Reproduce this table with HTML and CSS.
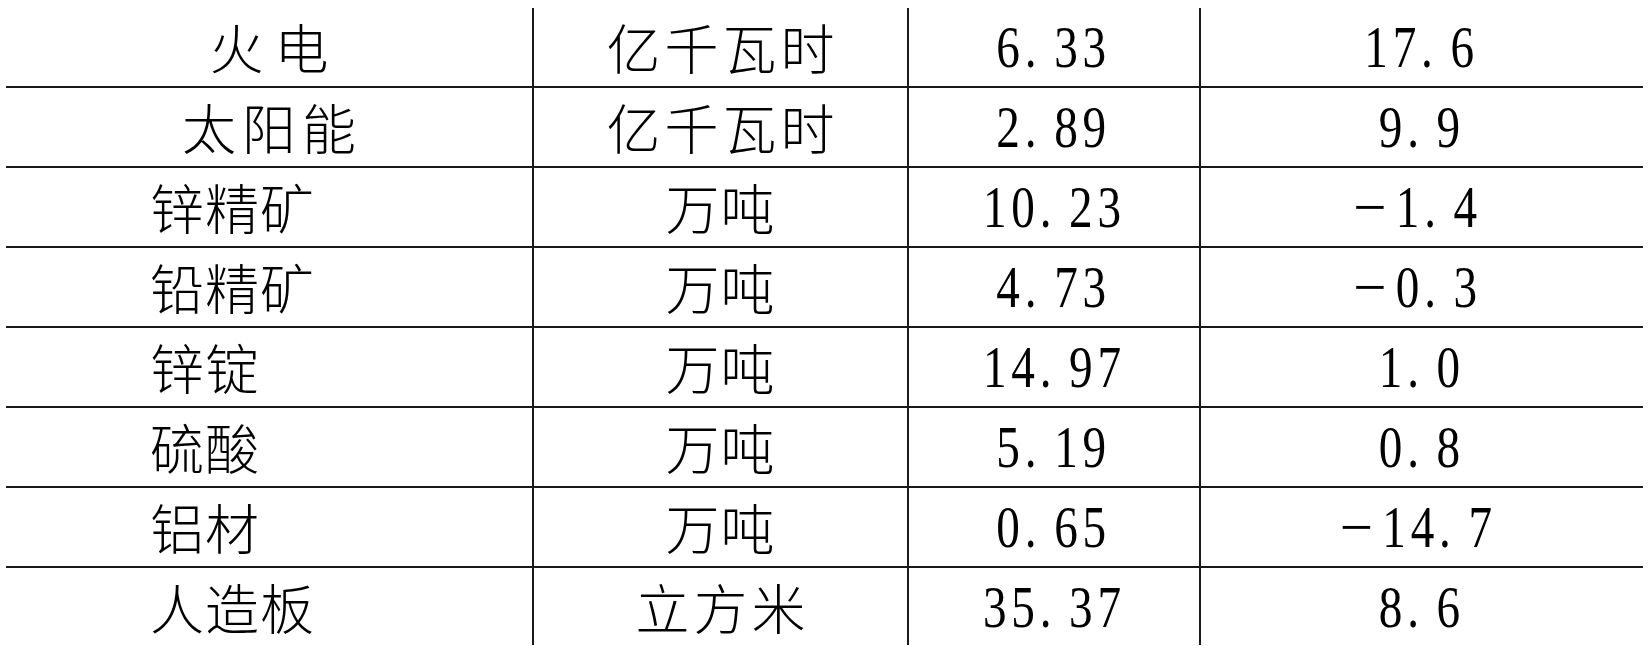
FILE: index.html
```html
<!DOCTYPE html>
<html lang="zh-CN">
<head>
<meta charset="utf-8">
<title>产量表</title>
<link rel="stylesheet" href="styles.css">
</head>
<body>
<table class="grid">
  <colgroup>
    <col class="c1"><col class="c2"><col class="c3"><col class="c4">
  </colgroup>
  <tbody>
    <tr>
      <td class="name center"><span class="wide2">火电</span></td>
      <td class="unit"><span class="sp4">亿千瓦时</span></td>
      <td class="num"><span class="n">6<span class="pt">.</span>33</span></td>
      <td class="num"><span class="n">17<span class="pt">.</span>6</span></td>
    </tr>
    <tr>
      <td class="name center"><span class="sp6">太阳能</span></td>
      <td class="unit"><span class="sp4">亿千瓦时</span></td>
      <td class="num"><span class="n">2<span class="pt">.</span>89</span></td>
      <td class="num"><span class="n">9<span class="pt">.</span>9</span></td>
    </tr>
    <tr>
      <td class="name">锌精矿</td>
      <td class="unit">万吨</td>
      <td class="num"><span class="n">10<span class="pt">.</span>23</span></td>
      <td class="num"><span class="n"><span class="minus">−</span>1<span class="pt">.</span>4</span></td>
    </tr>
    <tr>
      <td class="name">铅精矿</td>
      <td class="unit">万吨</td>
      <td class="num"><span class="n">4<span class="pt">.</span>73</span></td>
      <td class="num"><span class="n"><span class="minus">−</span>0<span class="pt">.</span>3</span></td>
    </tr>
    <tr>
      <td class="name">锌锭</td>
      <td class="unit">万吨</td>
      <td class="num"><span class="n">14<span class="pt">.</span>97</span></td>
      <td class="num"><span class="n">1<span class="pt">.</span>0</span></td>
    </tr>
    <tr>
      <td class="name">硫酸</td>
      <td class="unit">万吨</td>
      <td class="num"><span class="n">5<span class="pt">.</span>19</span></td>
      <td class="num"><span class="n">0<span class="pt">.</span>8</span></td>
    </tr>
    <tr>
      <td class="name">铝材</td>
      <td class="unit">万吨</td>
      <td class="num"><span class="n">0<span class="pt">.</span>65</span></td>
      <td class="num"><span class="n"><span class="minus">−</span>14<span class="pt">.</span>7</span></td>
    </tr>
    <tr class="last">
      <td class="name">人造板</td>
      <td class="unit"><span class="sp4">立方米</span></td>
      <td class="num"><span class="n">35<span class="pt">.</span>37</span></td>
      <td class="num"><span class="n">8<span class="pt">.</span>6</span></td>
    </tr>
  </tbody>
</table>
</body>
</html>
```

FILE: styles.css
```css
html, body {
  margin: 0;
  padding: 0;
  background: #ffffff;
}

body {
  padding: 8px 0 0 6px;
  color: #000000;
  font-family: "Noto Sans CJK SC", "Noto Sans", sans-serif;
}

.grid {
  border-collapse: collapse;
  table-layout: fixed;
  width: 1637px;
}

.c1 { width: 527px; }
.c2 { width: 375px; }
.c3 { width: 292px; }
.c4 { width: 443px; }

.grid td {
  height: 78px;
  padding: 0;
  border-bottom: 2px solid #1a1a1a;
  border-right: 2px solid #1a1a1a;
  vertical-align: middle;
  font-size: 54px;
  font-weight: 300;
  line-height: 1;
  letter-spacing: 1px;
  white-space: nowrap;
}

.grid tr.last td {
  border-bottom: none;
  height: 77px;
}

.grid td:last-child {
  border-right: none;
}

.name {
  text-align: left;
  padding-left: 144px !important;
}

.name.center {
  text-align: center;
  padding-left: 0 !important;
}

.unit {
  text-align: center;
}

.wide2 {
  letter-spacing: 11px;
  margin-right: -11px;
}

.sp6 {
  letter-spacing: 6px;
  margin-right: -6px;
}

.sp4 {
  letter-spacing: 4px;
  margin-right: -4px;
}

.num {
  text-align: center;
}

.n {
  display: inline-block;
  font-family: "Liberation Serif", "Times New Roman", serif;
  font-size: 59px;
  font-weight: 400;
  letter-spacing: 6px;
  transform: scaleX(0.8);
  transform-origin: center;
}

.minus {
  display: inline-block;
  transform: scaleX(1.25);
  transform-origin: right center;
  margin-right: 4px;
}

.pt {
  padding-right: 16px;
}
```
